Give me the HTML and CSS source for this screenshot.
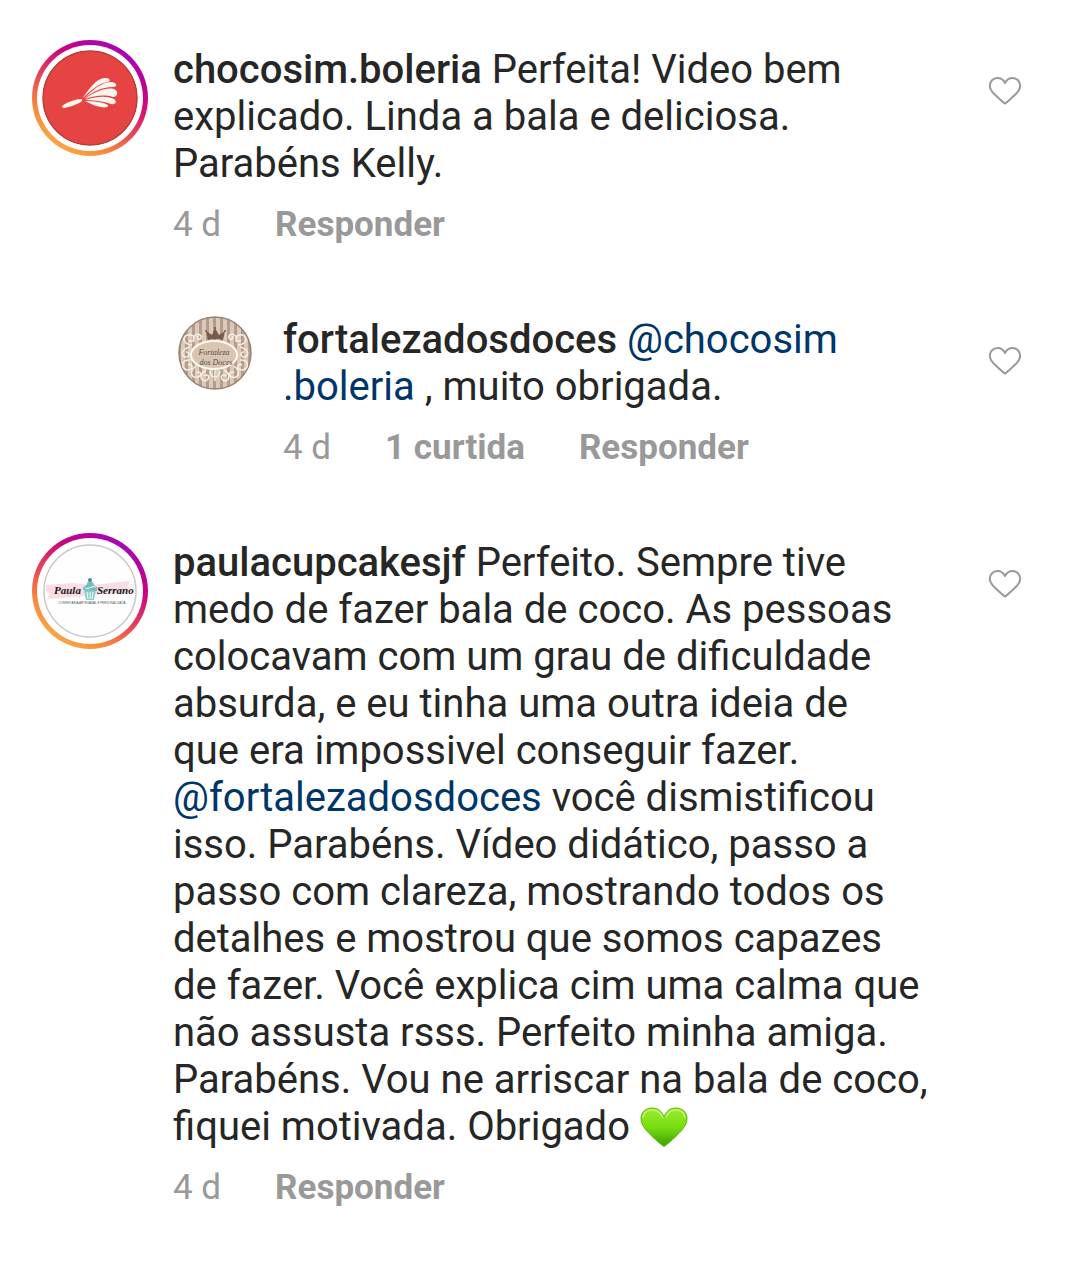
FILE: index.html
```html
<!DOCTYPE html>
<html lang="pt-BR">
  <head>
    <meta charset="UTF-8" />
    <meta name="viewport" content="width=device-width, initial-scale=1.0" />
    <title>Comentários</title>
    <link rel="stylesheet" href="styles.css">
  </head>
  <body>
    <!-- Shared heart outline for the like buttons -->
    <svg class="defs" width="0" height="0" aria-hidden="true">
      <symbol id="heart" viewBox="0 0 34 30">
        <path d="M17 27.6 C16 27.2 11 22.6 6.500 18.300 C3 15 1.800 12.800 1.800 9.800 C1.800 5.300 5.200 2 9.400 2 C12.800 2 15.400 3.800 17 7 C18.600 3.800 21.200 2 24.600 2 C28.800 2 32.200 5.300 32.200 9.800 C32.200 12.800 31 15 27.500 18.300 C23 22.600 18 27.200 17 27.600 Z" fill="none" stroke="#999" stroke-width="2" stroke-linejoin="round" />
      </symbol>
    </svg>

    <main class="comments">
      <article class="comment">
        <a class="avatar story" href="#" aria-label="chocosim.boleria">
          <svg viewBox="0 0 96 96">
            <circle cx="48" cy="48" r="47" fill="#e64442" stroke="#b93c3b" stroke-width="1.500" />
            <g fill="#fff5f0">
              <path d="M20 56 C25 52 34 49 40 49 C41 51 39 52 35 54 C30 56 24 58 21 58 Z" />
              <path d="M41 48 C46 40 55 27 64 28 C68 28 69 31 66 32 C57 33 49 40 41 48 Z" />
              <path d="M42 49 C50 40 61 31 70 32 C75 33 76 37 71 37 C59 37 50 42 42 49 Z" />
              <path d="M43 49 C52 42 64 37 72 39 C77 41 76 47 71 47 C62 44 52 46 43 49 Z" />
              <path d="M43 50 C52 47 64 45 72 49 C76 52 73 55 69 54 C60 51 52 50 43 50 Z" />
              <path d="M43 51 C51 51 61 52 66 55 C67 57 63 58 59 57 C52 56 48 53 43 51 Z" />
            </g>
          </svg>
        </a>
        <div class="content">
          <p class="text"><a class="user" href="#">chocosim.boleria</a> Perfeita! Video bem<br>explicado. Linda a bala e deliciosa.<br>Parabéns Kelly.</p>
          <div class="meta">
            <time>4 d</time>
            <button type="button">Responder</button>
          </div>
        </div>
        <button class="like" type="button" aria-label="Curtir"><svg><use href="#heart" /></svg></button>
      </article>

      <article class="comment reply">
        <a class="avatar" href="#" aria-label="fortalezadosdoces">
          <svg viewBox="0 0 74 74">
            <defs>
              <pattern id="stripes" width="7" height="74" patternUnits="userSpaceOnUse">
                <rect width="7" height="74" fill="#dccab6" />
                <rect width="3" height="74" fill="#b39d90" />
              </pattern>
            </defs>
            <circle cx="37" cy="37" r="36" fill="url(#stripes)" stroke="#998277" stroke-width="1.500" />
            <g fill="none" stroke="#f6f0e5" stroke-width="1.500">
              <path d="M14 29 C2 28 5 17 13 19 C19 21 15 28 11 24 M16 26 C13 16 25 17 23 22 C21 25 18 22 20 20" />
              <path d="M60 29 C72 28 69 17 61 19 C55 21 59 28 63 24 M58 26 C61 16 49 17 51 22 C53 25 56 22 54 20" />
              <path d="M12 31 C4 33 2 39 7 41 C12 42 12 35 8 36 M12 44 C2 43 3 54 10 54 C16 54 15 46 10 49 M18 50 C10 56 14 63 20 61 C25 59 22 54 18 57 M28 54 C20 59 23 67 29 64 C33 61 29 57 26 60" />
              <path d="M62 31 C70 33 72 39 67 41 C62 42 62 35 66 36 M62 44 C72 43 71 54 64 54 C58 54 59 46 64 49 M56 50 C64 56 60 63 54 61 C49 59 52 54 56 57 M46 54 C54 59 51 67 45 64 C41 61 45 57 48 60" />
              <path d="M32 55 C33 63 41 63 42 55 M37 52 V65" />
            </g>
            <ellipse cx="36" cy="39" rx="23" ry="14" fill="#d9c6b0" stroke="#fffaf0" stroke-width="2" />
            <path d="M30 24 L28 15 L34 19 L37 12 L41 19 L47 15 L45 24 Q37 22 30 24 Z" fill="#775b4b" />
            <circle cx="28" cy="15" r="1" fill="#775b4b" />
            <circle cx="37" cy="12" r="1" fill="#775b4b" />
            <circle cx="47" cy="15" r="1" fill="#775b4b" />
            <text class="logo-serif" x="36" y="39" text-anchor="middle">Fortaleza</text>
            <text class="logo-serif" x="38" y="49" text-anchor="middle">dos Doces</text>
          </svg>
        </a>
        <div class="content">
          <p class="text"><a class="user" href="#">fortalezadosdoces</a> <a class="mention" href="#">@chocosim<br>.boleria</a> , muito obrigada.</p>
          <div class="meta">
            <time>4 d</time>
            <button type="button">1 curtida</button>
            <button type="button">Responder</button>
          </div>
        </div>
        <button class="like" type="button" aria-label="Curtir"><svg><use href="#heart" /></svg></button>
      </article>

      <article class="comment">
        <a class="avatar story" href="#" aria-label="paulacupcakesjf">
          <svg viewBox="0 0 96 96">
            <circle cx="48" cy="48" r="46" fill="#fefefe" stroke="#c9c9cb" stroke-width="1.500" />
            <path d="M4 42 L30 40 L50 42 L88 38 L86 43 L90 47 L84 50 L58 51 L35 54 L5 56 L8 51 L4 48 Z" fill="#f9dde5" />
            <path d="M42 47 L54 47 L52 57 H44 Z" fill="#8bcdca" />
            <path d="M41 47 C41 43 44 43 45 41 C45 38 47 40 48 36 C49 40 52 39 52 42 C55 43 56 45 55 48 Z" fill="#76bdbb" />
            <path d="M45 49 L46 56 M48 49 V56 M51 49 L50 56 M43 45 C47 47 50 42 54 44" fill="none" stroke="#f2ffff" />
            <circle cx="48" cy="37" r="2" fill="#45908e" />
            <text class="logo-script" x="12" y="51">Paula</text>
            <text class="logo-script" x="55" y="51">Serrano</text>
            <text class="logo-small" x="50" y="61" text-anchor="middle">CONFEITARIA ARTESANAL E PERSONALIZADA</text>
          </svg>
        </a>
        <div class="content">
          <p class="text"><a class="user" href="#">paulacupcakesjf</a> Perfeito. Sempre tive<br>medo de fazer bala de coco. As pessoas<br>colocavam com um grau de dificuldade<br>absurda, e eu tinha uma outra ideia de<br>que era impossivel conseguir fazer.<br><a class="mention" href="#">@fortalezadosdoces</a> você dismistificou<br>isso. Parabéns. Vídeo didático, passo a<br>passo com clareza, mostrando todos os<br>detalhes e mostrou que somos capazes<br>de fazer. Você explica cim uma calma que<br>não assusta rsss. Perfeito minha amiga.<br>Parabéns. Vou ne arriscar na bala de coco,<br>fiquei motivada. Obrigado <svg class="emoji" viewBox="0 0 48 42" role="img" aria-label="coração verde">
              <defs>
                <linearGradient id="green" x2="0" y2="1">
                  <stop offset="0" stop-color="#9bea2c" />
                  <stop offset="0.500" stop-color="#76de10" />
                  <stop offset="1" stop-color="#3ca006" />
                </linearGradient>
              </defs>
              <path d="M24 40.500 C20 38 11 30 6 24 C2 19 1 16 1 12 C1 6 6 2 12 2 C18 2 22 5 24 11 C26 5 30 2 36 2 C42 2 47 6 47 12 C47 16 46 19 42 24 C37 30 28 38 24 40.500 Z" fill="url(#green)" stroke="#65b51f" />
              <path d="M3 12 C4 6 8 4 12 4 C17 4 21 7 23 12 M26 11 C28 6 32 4 36 4 C40 4 44 6 45 12" fill="none" stroke="#c0f173" stroke-width="1.500" />
            </svg></p>
          <div class="meta">
            <time>4 d</time>
            <button type="button">Responder</button>
          </div>
        </div>
        <button class="like" type="button" aria-label="Curtir"><svg><use href="#heart" /></svg></button>
      </article>
    </main>
  </body>
</html>
```

FILE: styles.css
```css
* {
  box-sizing: border-box;
}

body {
  margin: 0;
  background-color: #fff;
  color: #262626;
  font-family: Roboto, sans-serif;
}

a {
  color: inherit;
  text-decoration: none;
}

button {
  padding: 0;
  border: 0;
  background: none;
  font: inherit;
  color: inherit;
  cursor: pointer;
}

svg {
  display: block;
}

.defs {
  display: none;
}

.comments {
  display: flex;
  flex-direction: column;
  gap: 65px;
  padding: 40px 58px 64px 32px;
}

.comment {
  display: flex;
  align-items: flex-start;
  gap: 25px;
}

.comment.reply {
  gap: 31px;
  padding-top: 6px;
  padding-left: 146px;
}

.avatar {
  flex: none;
  width: 74px;
  border-radius: 50%;
}

.avatar.story {
  width: 116px;
  padding: 5px;
  background: linear-gradient(212deg, #a307ba 12%, #c90083 32%, #e23b5c 52%, #f98b3c 74%, #fbb14a 92%);
}

.story svg {
  padding: 5px;
  border-radius: 50%;
  background-color: #fff;
}

.content {
  flex: 1;
  min-width: 0;
  padding-top: 6px;
}

.reply .content {
  padding-top: 0;
}

.text {
  margin: 0;
  font-size: 40px;
  line-height: 47px;
}

.user {
  font-weight: 500;
}

.mention {
  color: #003569;
}

.meta {
  display: flex;
  gap: 54px;
  margin-top: 17px;
  font-size: 35px;
  line-height: 41px;
  color: #999;
}

.meta button {
  font-weight: 700;
}

.like {
  flex: none;
  margin-top: 36px;
}

.reply .like {
  margin-top: 30px;
}

.like svg {
  width: 34px;
  height: 30px;
}

.emoji {
  display: inline-block;
  width: 48px;
  height: 42px;
  vertical-align: -8px;
}

.logo-serif {
  font: italic 8px "Liberation Serif", serif;
  fill: #60483e;
}

.logo-script {
  font: italic 700 11px "Liberation Serif", serif;
  fill: #171717;
}

.logo-small {
  font: 3px "Liberation Sans", sans-serif;
  fill: #555;
}
```
